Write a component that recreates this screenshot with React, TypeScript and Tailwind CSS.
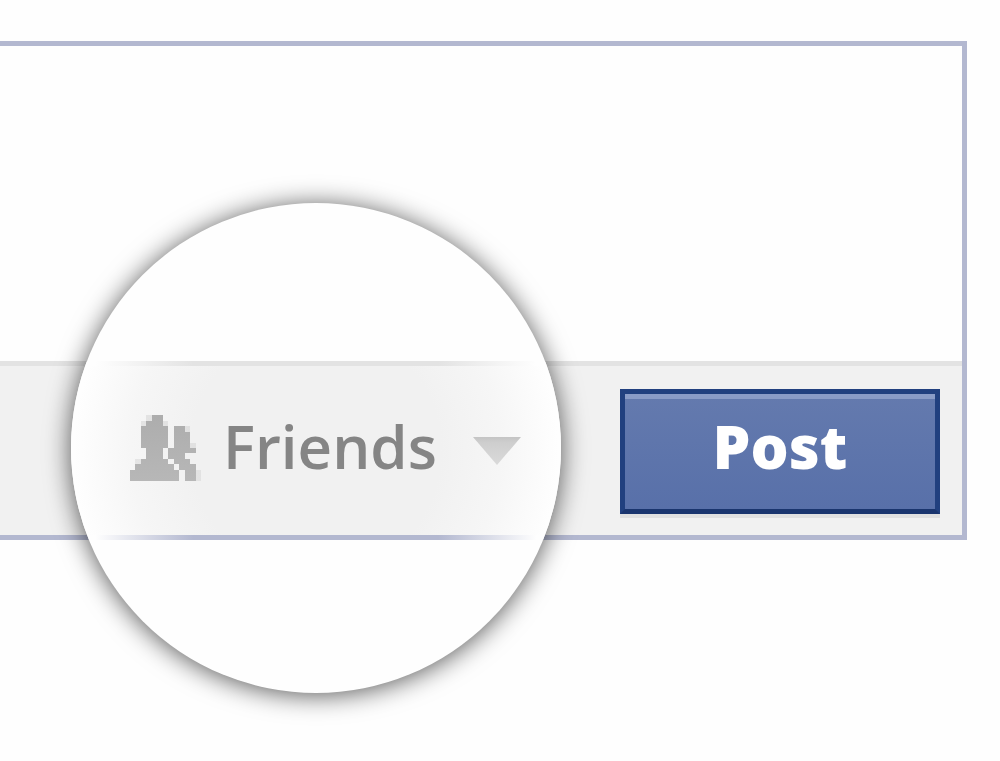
// Each string is a row of the pixel icon: # is solid, - is a softened corner
const FRIENDS_PIXELS = [
  "...-##.......",
  "..-###-......",
  "..#####.##-..",
  "..#####.###..",
  "..#####.###..",
  "..#####.###-.",
  "...###.#####.",
  "...###.###...",
  ".-#####.###..",
  ".#######.###.",
  "#########.##-",
  "#########.##-",
]

function FriendsIcon() {
  return (
    <svg viewBox="0 0 13 12" className="h-[66px] w-[71px] shrink-0" shapeRendering="crispEdges" aria-hidden="true">
      <defs>
        <linearGradient id="friends-fill" gradientUnits="userSpaceOnUse" x1="0" y1="0" x2="0" y2="12">
          <stop offset="0" stopColor="#adadad" />
          <stop offset="1" stopColor="#b7b7b7" />
        </linearGradient>
      </defs>
      {FRIENDS_PIXELS.map((row, y) =>
        row
          .split("")
          .map((cell, x) =>
            cell === "." ? null : (
              <rect
                key={`${x}-${y}`}
                x={x}
                y={y}
                width="1"
                height="1"
                fill="url(#friends-fill)"
                opacity={cell === "-" ? 0.25 : 1}
              />
            ),
          ),
      )}
    </svg>
  )
}

function CaretIcon() {
  return (
    <svg viewBox="0 0 48 28" className="h-7 w-12 shrink-0" aria-hidden="true">
      <defs>
        <linearGradient id="caret-fill" x1="0" y1="0" x2="0" y2="1">
          <stop offset="0" stopColor="#c4c4c4" />
          <stop offset="0.2" stopColor="#cecece" />
          <stop offset="1" stopColor="#dadada" />
        </linearGradient>
      </defs>
      <path d="M0 0H48L24 28Z" fill="url(#caret-fill)" />
    </svg>
  )
}

function AudienceLens() {
  return (
    <div className="absolute top-[157px] left-[71px] flex size-[490px] flex-col justify-center overflow-hidden rounded-full bg-[#fefefe] pt-1 shadow-[0_2px_26px_rgba(0,0,0,0.66)]">
      <span className="h-[5px] bg-[linear-gradient(to_right,#fefefe_5%,#e3e3e3_25%,#e3e3e3_75%,#fefefe_95%)]" />
      <button
        type="button"
        aria-haspopup="menu"
        className="flex h-[169px] w-full items-center bg-[radial-gradient(circle_at_center,#f1f1f1_125px,#f6f6f6_185px,#fefefe_242px)] pb-1 pl-[59px]"
      >
        <FriendsIcon />
        <span className="ml-[22px] pb-1 text-[60px] leading-[72px] font-semibold text-[#858585]">Friends</span>
        <span className="ml-9 pt-1.5">
          <CaretIcon />
        </span>
      </button>
      <span className="h-[5px] bg-[linear-gradient(to_right,#fefefe_5%,#b3b8d0_25%,#b3b8d0_75%,#fefefe_95%)]" />
    </div>
  )
}

export default function App() {
  return (
    <main className="min-h-screen bg-[#fefefe] pt-[41px] pr-[33px] font-['Open_Sans','Noto_Sans',sans-serif]">
      <form
        className="relative border-[5px] border-l-0 border-[#b3b8d0] bg-[#fefefe]"
        onSubmit={(e) => e.preventDefault()}
      >
        <textarea
          aria-label="Write a post"
          className="block h-[315px] w-full resize-none bg-transparent p-6 text-[60px] text-[#333333] outline-none"
        />
        <div className="flex justify-end border-t-[5px] border-[#e3e3e3] bg-[#f1f1f1] pt-[23px] pr-[22px] pb-[21px]">
          <button
            type="submit"
            className="h-[125px] w-80 border-[5px] border-[#21407f] border-b-[#1a356e] bg-linear-to-b from-[#647aae] to-[#5870a9] pb-3 text-[60px] leading-[72px] font-extrabold text-white shadow-[inset_0_5px_0_#8a9cc7,0_4px_0_#e0e0e0]"
          >
            Post
          </button>
        </div>
        <AudienceLens />
      </form>
    </main>
  )
}
